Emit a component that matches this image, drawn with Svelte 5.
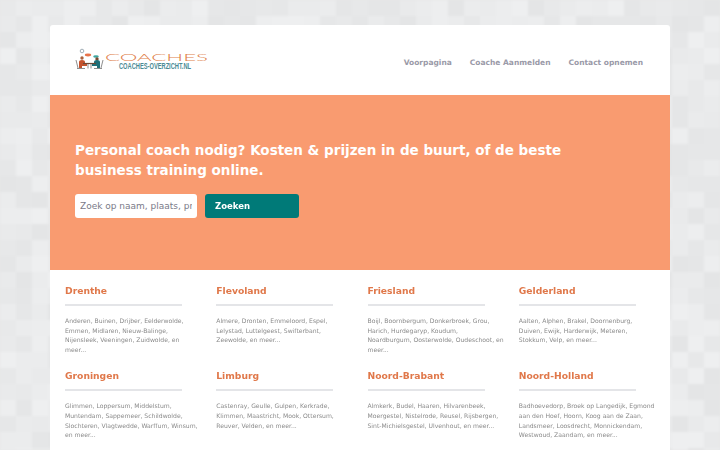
<script lang="ts">
    const regions = [
        { name: "Drenthe", towns: "Anderen, Buinen, Drijber, Eelderwolde, Emmen, Midlaren, Nieuw-Balinge, Nijensleek, Veeningen, Zuidwolde, en meer..." },
        { name: "Flevoland", towns: "Almere, Dronten, Emmeloord, Espel, Lelystad, Luttelgeest, Swifterbant, Zeewolde, en meer..." },
        { name: "Friesland", towns: "Boijl, Boornbergum, Donkerbroek, Grou, Harich, Hurdegaryp, Koudum, Noardburgum, Oosterwolde, Oudeschoot, en meer..." },
        { name: "Gelderland", towns: "Aalten, Alphen, Brakel, Doornenburg, Duiven, Ewijk, Harderwijk, Meteren, Stokkum, Velp, en meer..." },
        { name: "Groningen", towns: "Glimmen, Loppersum, Middelstum, Muntendam, Sappemeer, Schildwolde, Slochteren, Vlagtwedde, Warffum, Winsum, en meer..." },
        { name: "Limburg", towns: "Castenray, Geulle, Gulpen, Kerkrade, Klimmen, Maastricht, Mook, Ottersum, Reuver, Velden, en meer..." },
        { name: "Noord-Brabant", towns: "Almkerk, Budel, Haaren, Hilvarenbeek, Moergestel, Nistelrode, Reusel, Rijsbergen, Sint-Michielsgestel, Ulvenhout, en meer..." },
        { name: "Noord-Holland", towns: "Badhoevedorp, Broek op Langedijk, Egmond aan den Hoef, Hoorn, Koog aan de Zaan, Landsmeer, Loosdrecht, Monnickendam, Westwoud, Zaandam, en meer..." },
    ];

    // grey mosaic behind the page
    const cell = 16;
    const tiles: { x: number; y: number; fill: string }[] = [];
    let seed = 7;
    for (let y = 0; y < 450; y += cell) {
        for (let x = 0; x < 720; x += cell) {
            seed = (seed * 16807) % 2147483647;
            const g = 228 + (seed % 11);
            tiles.push({ x, y, fill: `rgb(${g},${g + 1},${g + 2})` });
        }
    }
</script>

<svg class="mosaic" width="720" height="450" aria-hidden="true">
    {#each tiles as t}
        <rect x={t.x} y={t.y} width={cell} height={cell} fill={t.fill} />
    {/each}
</svg>

<div class="page">
    <div class="card">
        <header class="top">
            <svg class="logo" width="180" height="28" viewBox="0 0 180 28">
                <!-- table and two people -->
                <circle cx="7" cy="5" r="1.8" fill="none" stroke="#8a9aa5" stroke-width="0.8" />
                <ellipse cx="13" cy="9" rx="3.2" ry="1.4" fill="#e8734a" />
                <ellipse cx="21" cy="10.5" rx="2.8" ry="1.3" fill="#3fa7a0" />
                <circle cx="7" cy="12" r="1.7" fill="#a8603c" />
                <circle cx="22" cy="13" r="1.7" fill="#7a4a30" />
                <path d="M4 22v-6q0-2 3-2t3 2v2h2v2H7v2z" fill="#c4532e" />
                <path d="M25 22v-6q0-2-3-2t-3 2v2h-2v2h5v2z" fill="#1f6f78" />
                <path d="M8 17.5h13" stroke="#6b4a38" stroke-width="1.2" />
                <path d="M13 18v4.5M16 18v4.5M1 14l2 8M28 14l-2 8M2 22.5h8M19 22.5h8" stroke="#5d5d5d" stroke-width="0.7" fill="none" />
                <text x="30" y="14.7" class="logo-big" textLength="103" lengthAdjust="spacingAndGlyphs">COACHES</text>
                <text x="44" y="23" class="logo-small" textLength="72" lengthAdjust="spacingAndGlyphs">COACHES-OVERZICHT.NL</text>
            </svg>
            <nav class="menu">
                <span>Voorpagina</span>
                <span>Coache Aanmelden</span>
                <span>Contact opnemen</span>
            </nav>
        </header>

        <section class="hero">
            <h1>Personal coach nodig? Kosten &amp; prijzen in de buurt, of de beste business training online.</h1>
            <form class="search" on:submit|preventDefault>
                <input type="text" placeholder="Zoek op naam, plaats, provincie" />
                <button type="submit">Zoeken</button>
            </form>
        </section>

        <section class="regions">
            {#each regions as r}
                <div class="region">
                    <h2>{r.name}</h2>
                    <hr />
                    <p>{r.towns}</p>
                </div>
            {/each}
        </section>
    </div>
</div>

<style>
    :global(body) {
        background: #e6e7e8;
        overflow: hidden;
    }
    .mosaic {
        position: absolute;
        left: 0;
        top: 0;
        filter: blur(1px);
    }
    .page {
        position: relative;
        padding: 25px 50px 0;
        height: 425px;
        overflow: hidden;
        font-family: "DejaVu Sans", sans-serif;
    }
    .card {
        background: #fff;
        border-radius: 3px 3px 0 0;
        filter: blur(0.25px);
    }
    .top {
        height: 70px;
        display: flex;
        justify-content: space-between;
        padding: 0 27px 0 25px;
        box-sizing: border-box;
    }
    .logo {
        margin-top: 21px;
    }
    .logo-big {
        font-family: "Lato", sans-serif;
        font-weight: 300;
        font-size: 10.5px;
        fill: #e0804a;
    }
    .logo-small {
        font-family: "Liberation Sans", sans-serif;
        font-weight: 700;
        font-size: 8.4px;
        fill: #4a8a94;
    }
    .menu {
        display: flex;
        gap: 18px;
        margin-top: 32px;
        font-size: 7.5px;
        font-weight: 700;
        line-height: 11px;
        color: #9a9aa8;
    }
    .hero {
        height: 175px;
        background: #f99b70;
        padding: 45px 25px 0;
        box-sizing: border-box;
    }
    h1 {
        margin: 0;
        max-width: 500px;
        font-size: 13.5px;
        line-height: 20px;
        font-weight: 700;
        color: #fff;
    }
    .search {
        display: flex;
        gap: 8px;
        margin-top: 14px;
    }
    input {
        width: 122px;
        height: 24px;
        box-sizing: border-box;
        border: 0;
        border-radius: 3px;
        padding: 0 5px;
        background: #fff;
        font-family: inherit;
        font-size: 9px;
        color: #333;
    }
    input::placeholder {
        color: #7a7a88;
        opacity: 1;
    }
    button {
        width: 94px;
        height: 24px;
        border: 0;
        border-radius: 3px;
        padding: 0 10px;
        background: #007a78;
        color: #fff;
        font-family: inherit;
        font-size: 8.5px;
        font-weight: 700;
        text-align: left;
    }
    .regions {
        display: grid;
        grid-template-columns: repeat(4, 1fr);
        padding: 15px 0 30px 15px;
        row-gap: 16px;
    }
    .region {
        padding-right: 15px;
    }
    h2 {
        margin: 0;
        font-size: 9.2px;
        line-height: 11px;
        font-weight: 700;
        color: #e0784a;
    }
    hr {
        width: 117px;
        height: 2px;
        margin: 8px 0 10px;
        border: 0;
        background: #e4e5e8;
    }
    p {
        margin: 0;
        font-size: 6.1px;
        line-height: 9.6px;
        color: #8a8a8a;
    }
</style>
